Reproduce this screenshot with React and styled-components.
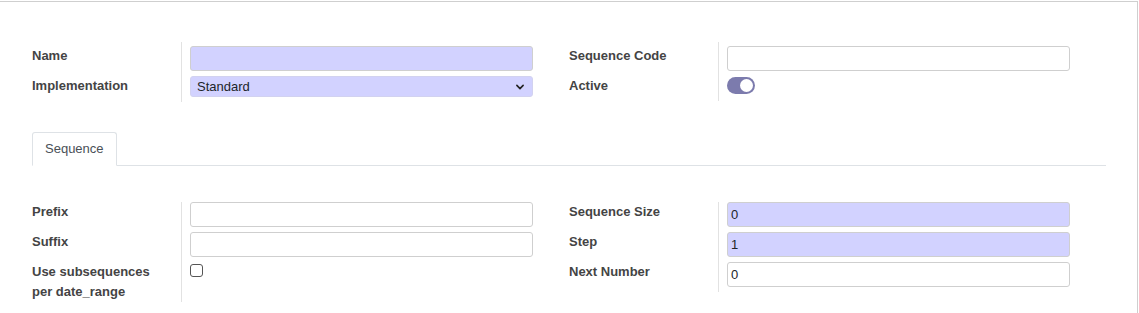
import styled, { createGlobalStyle } from 'styled-components'

const GlobalStyle = createGlobalStyle`
  body {
    margin: 0;
    background: #fff;
    font-family: "Liberation Sans", Arial, sans-serif;
    font-size: 13px;
    color: #212529;
  }
`

const Chevron = () => (
  <svg width='10' height='10' viewBox='0 0 16 16'>
    <path d='M3 5.5l5 5 5-5' fill='none' stroke='#222' strokeWidth='2.6' strokeLinecap='round' strokeLinejoin='round' />
  </svg>
)

const App = () => {
  return (
    <Page>
      <GlobalStyle />
      <Sheet>
        <OuterGroup>
          <InnerGroup $padTop={4} $padBottom={5}>
            <Label>Name</Label>
            <Field><Input $filled /></Field>
            <Label>Implementation</Label>
            <Field>
              <SelectWrap>
                <Select defaultValue='standard'>
                  <option value='standard'>Standard</option>
                  <option value='no_gap'>No gap</option>
                </Select>
                <SelectArrow><Chevron /></SelectArrow>
              </SelectWrap>
            </Field>
          </InnerGroup>
          <InnerGroup $padTop={4} $padBottom={5}>
            <Label>Sequence Code</Label>
            <Field><Input /></Field>
            <Label>Active</Label>
            <Field>
              <Toggle $on><Knob /></Toggle>
            </Field>
          </InnerGroup>
        </OuterGroup>

        <Notebook>
          <TabList>
            <Tab $active>Sequence</Tab>
          </TabList>
          <TabPane>
            <OuterGroup>
              <InnerGroup $padTop={0} $padBottom={0}>
                <Label>Prefix</Label>
                <Field><Input /></Field>
                <Label>Suffix</Label>
                <Field><Input /></Field>
                <Label>Use subsequences<br />per date_range</Label>
                <Field><Checkbox type='checkbox' /></Field>
              </InnerGroup>
              <InnerGroup $padTop={0} $padBottom={5}>
                <Label>Sequence Size</Label>
                <Field><Input $filled defaultValue='0' /></Field>
                <Label>Step</Label>
                <Field><Input $filled defaultValue='1' /></Field>
                <Label>Next Number</Label>
                <Field><Input defaultValue='0' /></Field>
              </InnerGroup>
            </OuterGroup>
          </TabPane>
        </Notebook>
      </Sheet>
    </Page>
  )
}

const Page = styled.div`
  width: 1139px;
  height: 313px;
  padding-top: 1px;
  box-sizing: border-box;
  overflow: hidden;
`

const Sheet = styled.div`
  width: 1138px;
  height: 340px;
  box-sizing: border-box;
  border-top: 1px solid #cfcfcf;
  border-right: 1px solid #cfcfcf;
  padding: 40px 0 0 32px;
`

const OuterGroup = styled.div`
  display: grid;
  grid-template-columns: 501px 501px;
  column-gap: 36px;
  align-items: start;
`

const InnerGroup = styled.div`
  display: grid;
  grid-template-columns: 149px 352px;
  row-gap: 5px;
  padding-top: ${p => p.$padTop}px;
  padding-bottom: ${p => p.$padBottom}px;
  background: linear-gradient(#e2e2e2, #e2e2e2) no-repeat 149px 0 / 1px 100%;
`

const Label = styled.div`
  font-weight: bold;
  color: #444;
  line-height: 20px;
`

const Field = styled.div`
  padding-left: 9px;
  min-height: 20px;
`

const Input = styled.input`
  display: block;
  width: 343px;
  height: 25px;
  box-sizing: border-box;
  border: 1px solid #cfcfcf;
  border-radius: 3px;
  padding: 1px 3px;
  font: inherit;
  color: #212529;
  background: ${p => (p.$filled ? '#d2d2ff' : '#fff')};
  outline: none;
`

const SelectWrap = styled.div`
  position: relative;
  width: 343px;
`

const Select = styled.select`
  appearance: none;
  display: block;
  width: 100%;
  height: 21px;
  box-sizing: border-box;
  border: 1px solid #d2d2f0;
  border-radius: 3px;
  padding: 0 24px 0 6px;
  font: inherit;
  color: #212529;
  background: #d2d2ff;
  outline: none;
`

const SelectArrow = styled.span`
  position: absolute;
  right: 8px;
  top: 6px;
  display: flex;
  pointer-events: none;
`

const Toggle = styled.div`
  width: 28px;
  height: 17px;
  margin-top: 1px;
  box-sizing: border-box;
  border-radius: 9px;
  padding: 2px;
  display: flex;
  align-items: center;
  justify-content: ${p => (p.$on ? 'flex-end' : 'flex-start')};
  background: ${p => (p.$on ? '#7c7bad' : '#ccc')};
`

const Knob = styled.span`
  width: 13px;
  height: 13px;
  border-radius: 50%;
  background: #fff;
`

const Checkbox = styled.input`
  appearance: none;
  display: block;
  width: 13px;
  height: 13px;
  margin: 2px 0 0 0;
  box-sizing: border-box;
  border: 1.5px solid #555;
  border-radius: 3px;
  background: #fff;
`

const Notebook = styled.div`
  margin-top: 30px;
`

const TabList = styled.div`
  width: 1074px;
  display: flex;
  border-bottom: 1px solid #dee2e6;
`

const Tab = styled.div`
  padding: 6px 12px 6px 12px;
  line-height: 20px;
  margin-bottom: -1px;
  color: #495057;
  border: 1px solid ${p => (p.$active ? '#dee2e6' : 'transparent')};
  border-bottom-color: ${p => (p.$active ? '#fff' : 'transparent')};
  border-radius: 3px 3px 0 0;
  background: #fff;
`

const TabPane = styled.div`
  padding-top: 36px;
`

export default App
